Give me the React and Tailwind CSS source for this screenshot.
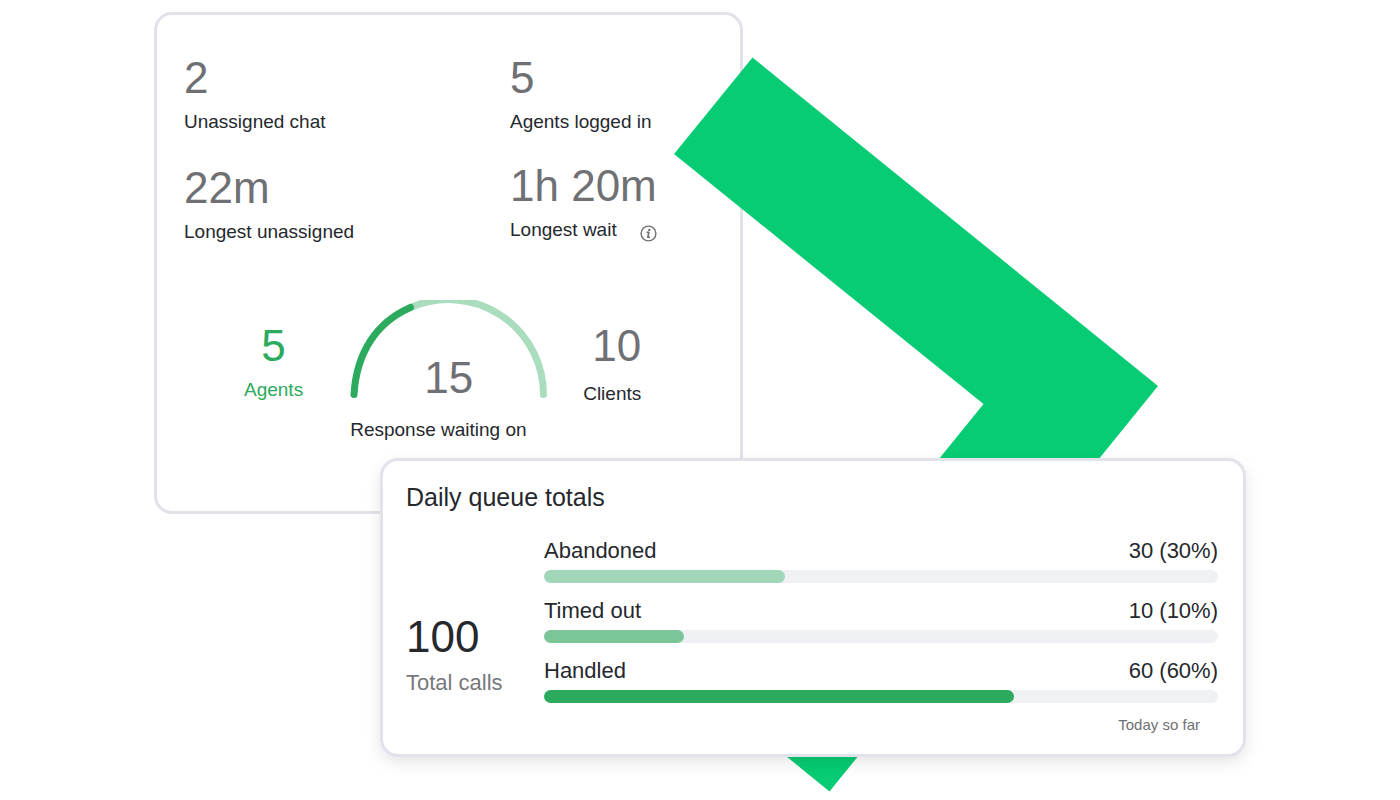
import React from 'react';

const chatStats = [
    { value: '2', label: 'Unassigned chat' },
    { value: '22m', label: 'Longest unassigned' },
];

const agentStats = [
    { value: '5', label: 'Agents logged in' },
    { value: '1h 20m', label: 'Longest wait', info: true },
];

// fill is the drawn width of the bar in percent
const queueRows = [
    { label: 'Abandoned', total: '30 (30%)', fill: 35.7, color: 'bg-[#a1d7b8]' },
    { label: 'Timed out', total: '10 (10%)', fill: 20.7, color: 'bg-[#7bc698]' },
    { label: 'Handled', total: '60 (60%)', fill: 69.7, color: 'bg-[#2caa5d]' },
];

function InfoIcon() {
    return (
        <svg className="size-[17px] text-[#6f7074]" viewBox="0 0 17 17" fill="none" stroke="currentColor" aria-label="More info">
            <circle cx="8.5" cy="8.5" r="7.4" strokeWidth="1.4" />
            <circle cx="9.3" cy="4.9" r="1.2" fill="currentColor" stroke="none" />
            <path d="M6.6 7.4H8.9L7.8 12.2H10" strokeWidth="1.6" strokeLinejoin="round" />
        </svg>
    );
}

function Stat({ value, label, info }) {
    return (
        <div>
            <p className="text-[44px] leading-[48px] text-[#6f7074]">{value}</p>
            <div className="mt-2 flex items-end gap-[23px] text-[19px] leading-6">
                <span>{label}</span>
                {info && <InfoIcon />}
            </div>
        </div>
    );
}

function Gauge() {
    return (
        <div className="w-[197px]">
            <div className="grid justify-items-center">
                <svg className="col-start-1 row-start-1" width="197" height="99" viewBox="0 0 197 99" fill="none" strokeWidth="7" strokeLinecap="round">
                    <path d="M60.5 7.5A95 95 0 0 1 193.5 94.5" stroke="#aaddbe" />
                    <path d="M4 94.5C6.5 52 27 22 60.5 7.5" stroke="#2caa5d" />
                </svg>
                <span className="col-start-1 row-start-1 pt-[54px] text-[44px] leading-[48px] text-[#6f7074]">15</span>
            </div>
            <p className="mt-4 text-[19px] leading-6 whitespace-nowrap">Response waiting on</p>
        </div>
    );
}

function ChatCard() {
    return (
        <section className="w-full max-w-[589px] rounded-[18px] border-3 border-[#e2e2ea] bg-white pt-[39px] pb-[69px]">
            <div className="flex pl-[27px]">
                <div className="flex w-[326px] flex-col gap-[30px]">
                    {chatStats.map((stat) => (
                        <Stat key={stat.label} {...stat} />
                    ))}
                </div>
                <div className="flex flex-col gap-7">
                    {agentStats.map((stat) => (
                        <Stat key={stat.label} {...stat} />
                    ))}
                </div>
            </div>

            <div className="mt-14 flex pl-[87px]">
                <div className="mr-[47px] pt-[22px] text-center text-[#2caa5d]">
                    <p className="text-[44px] leading-[48px]">5</p>
                    <p className="mt-2 text-[19px] leading-6">Agents</p>
                </div>
                <Gauge />
                <div className="ml-9 pt-[22px] text-right">
                    <p className="text-[44px] leading-[48px] text-[#6f7074]">10</p>
                    <p className="mt-3 text-[19px] leading-6">Clients</p>
                </div>
            </div>
        </section>
    );
}

function QueueCard() {
    return (
        <section className="relative -mt-14 ml-auto w-full max-w-[866px] rounded-[18px] border-3 border-[#e2e2ea] bg-white pt-[21px] pr-[25px] pb-[19px] pl-[23px] shadow-[0_6px_16px_rgba(0,0,0,0.1)]">
            <h2 className="text-[25px] leading-[30px]">Daily queue totals</h2>
            <div className="mt-[27px] flex">
                <div className="w-[138px] pt-[74px]">
                    <p className="text-[44px] leading-[48px]">100</p>
                    <p className="mt-[10px] text-[22px] leading-6 text-[#77787b]">Total calls</p>
                </div>
                <div className="flex-1">
                    <div className="flex flex-col gap-4">
                        {queueRows.map((row) => (
                            <div key={row.label}>
                                <div className="flex justify-between text-[22px] leading-6">
                                    <span>{row.label}</span>
                                    <span>{row.total}</span>
                                </div>
                                <div className="mt-[7px] h-[13px] rounded-full bg-[#f0f1f5]">
                                    <div className={`h-[13px] rounded-full ${row.color}`} style={{ width: `${row.fill}%` }} />
                                </div>
                            </div>
                        ))}
                    </div>
                    <p className="mt-3 pr-[18px] text-right text-[15px] leading-5 text-[#6f7074]">Today so far</p>
                </div>
            </div>
        </section>
    );
}

function App() {
    return (
        <main className="min-h-screen bg-white pt-3 font-['Liberation_Sans',Arial,sans-serif] text-[#25282d]">
            <div className="relative mx-auto w-full max-w-[1092px]">
                <ChatCard />
                {/* green arrow, over the first card and under the second */}
                <svg className="absolute top-[45px] left-[520px]" width="485" height="735" viewBox="0 0 485 735" aria-hidden="true">
                    <path d="M78.5 .5L484 329L155.5 734.5L59 656L309.5 347L0 97Z" fill="#07cc73" />
                </svg>
                <QueueCard />
            </div>
        </main>
    );
}

export default App;
